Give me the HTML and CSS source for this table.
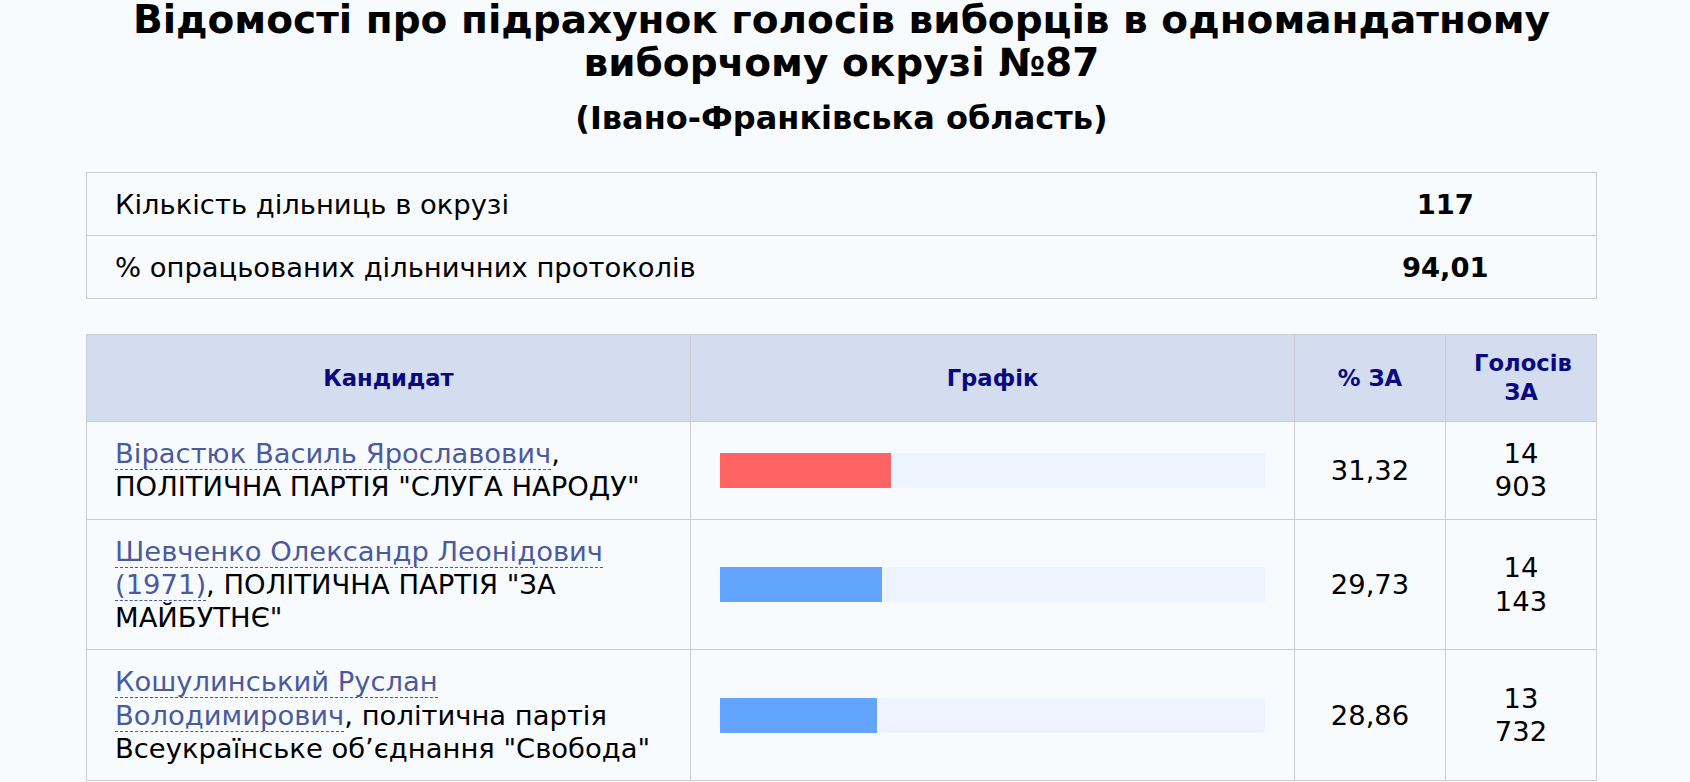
FILE: index.html
```html
<!DOCTYPE html>
<html lang="uk">
<head>
<meta charset="utf-8">
<title>Відомості про підрахунок голосів виборців</title>
<link rel="stylesheet" href="styles.css">
</head>
<body>
<main class="page">
  <h1 class="title">Відомості про підрахунок голосів виборців в одномандатному виборчому окрузі №87</h1>
  <h2 class="subtitle">(Івано-Франківська область)</h2>

  <table class="info">
    <colgroup>
      <col class="info-col-label">
      <col class="info-col-value">
    </colgroup>
    <tr>
      <td class="info-label">Кількість дільниць в окрузі</td>
      <td class="info-value">117</td>
    </tr>
    <tr>
      <td class="info-label">% опрацьованих дільничних протоколів</td>
      <td class="info-value">94,01</td>
    </tr>
  </table>

  <table class="results">
    <colgroup>
      <col class="col-wide">
      <col class="col-wide">
      <col class="col-narrow">
      <col class="col-narrow">
    </colgroup>
    <thead>
      <tr>
        <th>Кандидат</th>
        <th>Графік</th>
        <th>% ЗА</th>
        <th>Голосів ЗА</th>
      </tr>
    </thead>
    <tbody>
      <tr>
        <td class="cand"><a class="cand-link" href="#">Вірастюк Василь Ярославович</a>, ПОЛІТИЧНА ПАРТІЯ "СЛУГА НАРОДУ"</td>
        <td class="graph"><div class="track"><div class="fill fill-red" style="width:31.32%"></div></div></td>
        <td class="num">31,32</td>
        <td class="num">14 903</td>
      </tr>
      <tr>
        <td class="cand"><a class="cand-link" href="#">Шевченко Олександр Леонідович (1971)</a>, ПОЛІТИЧНА ПАРТІЯ "ЗА МАЙБУТНЄ"</td>
        <td class="graph"><div class="track"><div class="fill fill-blue" style="width:29.73%"></div></div></td>
        <td class="num">29,73</td>
        <td class="num">14 143</td>
      </tr>
      <tr>
        <td class="cand"><a class="cand-link" href="#">Кошулинський Руслан Володимирович</a>, політична партія Всеукраїнське об’єднання "Свобода"</td>
        <td class="graph"><div class="track"><div class="fill fill-blue" style="width:28.86%"></div></div></td>
        <td class="num">28,86</td>
        <td class="num">13 732</td>
      </tr>
    </tbody>
  </table>
</main>
</body>
</html>
```

FILE: styles.css
```css
html, body {
  margin: 0;
  padding: 0;
  background: #f7fbfd;
}

body {
  font-family: "DejaVu Sans", Verdana, sans-serif;
  color: #000;
  font-size: 27.4px;
  overflow: hidden;
}

.page {
  width: 1511px;
  margin-left: 86px;
}

.title {
  font-size: 39px;
  font-weight: bold;
  text-align: center;
  margin: -2px 0 0 0;
  line-height: 43px;
}

.subtitle {
  font-size: 32px;
  font-weight: bold;
  text-align: center;
  margin: 16px 0 0 0;
  line-height: 37px;
}

.info {
  width: 100%;
  margin-top: 35px;
  border-collapse: collapse;
  table-layout: fixed;
  border: 1px solid #cbcbcf;
}

.info-col-label {
  width: 80%;
}

.info-col-value {
  width: 20%;
}

.info td {
  border-top: 1px solid #cbcbcf;
  border-bottom: 1px solid #cbcbcf;
  height: 62px;
  padding: 0 28px;
  vertical-align: middle;
  line-height: 33px;
}

.info-value {
  text-align: center;
  font-weight: bold;
}

.results {
  width: 100%;
  margin-top: 35px;
  border-collapse: collapse;
  table-layout: fixed;
}

.col-wide {
  width: 40%;
}

.col-narrow {
  width: 10%;
}

.results th {
  background: #d4dcf0;
  color: #0a0a7e;
  font-size: 22.7px;
  font-weight: bold;
  line-height: 29px;
  height: 86px;
  padding: 0 28px;
  border: 1px solid #cbcbcf;
  text-align: center;
  vertical-align: middle;
}

.results td {
  border: 1px solid #cbcbcf;
  padding: 15px 28px;
  line-height: 33.3px;
  vertical-align: middle;
}

.cand {
  text-align: left;
}

.cand-link {
  color: #4b5a9f;
  text-decoration: none;
  border-bottom: 1px dashed #4b5a9f;
}

.num {
  text-align: center;
}

.results td.graph {
  padding-left: 29px;
  padding-right: 29px;
}

.track {
  height: 35px;
  background: #edf3ff;
}

.fill {
  height: 100%;
}

.fill-red {
  background: #ff6363;
}

.fill-blue {
  background: #62a4ff;
}
```
